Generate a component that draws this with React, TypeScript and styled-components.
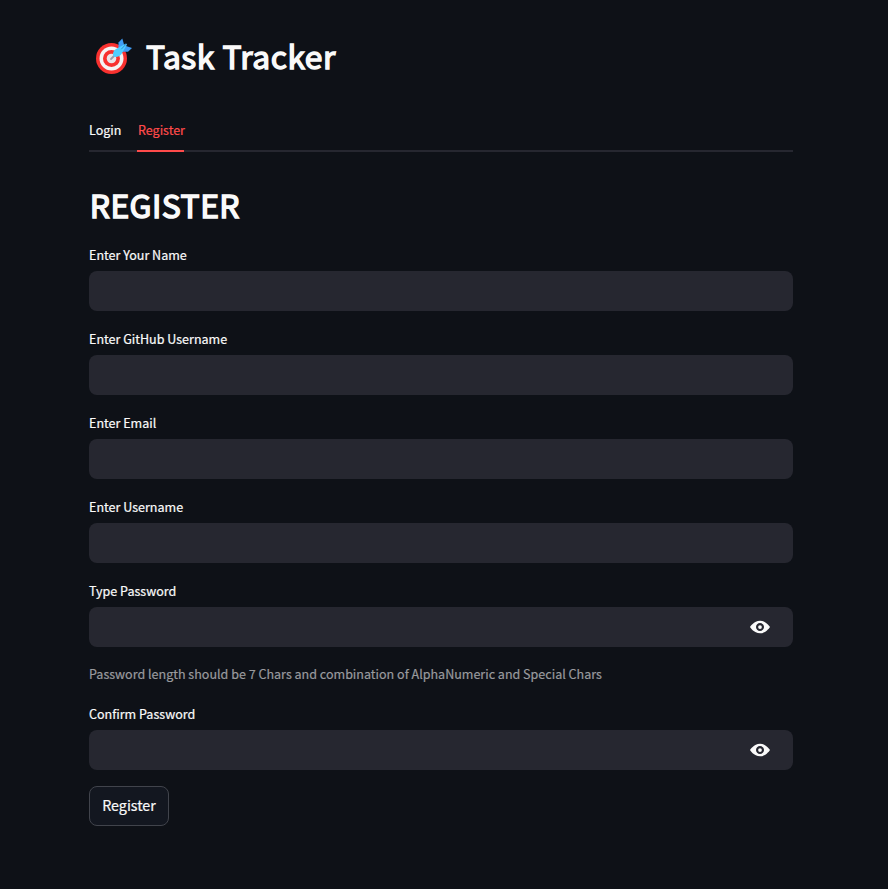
import React, { useState } from "react";
import styled, { createGlobalStyle } from "styled-components";

const GlobalStyle = createGlobalStyle`
  * { box-sizing: border-box; }
  body {
    margin: 0;
    background: #0e1117;
    color: #fafafa;
    font-family: "Noto Sans CJK SC", "Noto Sans", sans-serif;
    -webkit-text-stroke: 0.2px currentColor;
    overflow: hidden;
  }
`;

const Page = styled.main`
  width: 704px;
  min-height: 889px;
  margin-left: 89px;
  padding-top: 31px;
  display: flex;
  flex-direction: column;
`;

const Title = styled.h1`
  display: flex;
  align-items: center;
  gap: 14px;
  height: 48px;
  margin: 0;
  padding-left: 7px;
  font-size: 31.8px;
  line-height: 48px;
  font-weight: 400;
  letter-spacing: 0.5px;
  white-space: nowrap;
  -webkit-text-stroke: 1.4px currentColor;
`;

const TargetIcon = styled.svg`
  width: 36px;
  height: 36px;
  flex: none;
  margin-top: 2px;
`;

const TabList = styled.nav`
  display: flex;
  gap: 16px;
  height: 42px;
  margin-top: 31px;
  border-bottom: 2px solid #262730;
`;

const Tab = styled.button<{ $active?: boolean; $width: number }>`
  width: ${(p) => p.$width}px;
  height: 42px;
  padding: 0 0 1px ${(p) => (p.$active ? "1px" : "0")};
  border: 0;
  border-bottom: 2px solid ${(p) => (p.$active ? "#ff4b4b" : "transparent")};
  background: none;
  color: ${(p) => (p.$active ? "#ff4b4b" : "#fafafa")};
  font: 400 12.5px/24px "Noto Sans CJK SC", sans-serif;
  text-align: left;
  white-space: nowrap;
`;

const Heading = styled.h2`
  height: 48px;
  margin: 28px 0 15px;
  padding-left: 0.7px;
  font-size: 31.8px;
  line-height: 48px;
  font-weight: 400;
  letter-spacing: 0.5px;
  -webkit-text-stroke: 1.5px currentColor;
`;

const Form = styled.form`
  display: flex;
  flex-direction: column;
  align-items: stretch;
  gap: 16px;
`;

const Field = styled.label`
  display: flex;
  flex-direction: column;
  gap: 4px;
`;

const LabelText = styled.span`
  height: 24px;
  font-size: 12.54px;
  line-height: 24px;
`;

const InputBox = styled.div`
  display: flex;
  align-items: center;
  height: 40px;
  padding-right: 23px;
  border-radius: 8px;
  background: #262730;
`;

const Input = styled.input`
  flex: 1;
  min-width: 0;
  height: 40px;
  padding: 0 12px;
  border: 0;
  outline: 0;
  background: transparent;
  color: #fafafa;
  font: 400 14px "Noto Sans CJK SC", sans-serif;
`;

const RevealButton = styled.button`
  display: flex;
  padding: 0;
  border: 0;
  background: none;
  color: #fafafa;
`;

const Caption = styled.p`
  height: 23px;
  margin: 0;
  color: #999a9e;
  font-size: 12.54px;
  line-height: 21px;
  white-space: nowrap;
`;

const SubmitButton = styled.button`
  width: 80px;
  height: 40px;
  padding: 0 0 2px;
  border: 1px solid #41444c;
  border-radius: 8px;
  background: #131720;
  color: #fafafa;
  font: 400 14.3px/24px "Noto Sans CJK SC", sans-serif;
`;

function Target() {
  return (
    <TargetIcon viewBox="0 0 36 36" aria-hidden="true">
      <circle cx="15.5" cy="20.5" r="15.5" fill="#f8312f" />
      <circle cx="15.5" cy="20.5" r="12" fill="#f4f4f4" />
      <circle cx="15.5" cy="20.5" r="8.5" fill="#f8312f" />
      <circle cx="15.5" cy="20.5" r="4.8" fill="#e8e4e8" />
      <path d="M15 21 22 14" stroke="#9b9ba8" strokeWidth="1.8" strokeLinecap="round" />
      <path d="M22.5 12V4.5L26.3 0.4 28 6.5 26 12Z" fill="#3f9df5" />
      <path d="M24.5 13.8H32L36 10 30 8 25 10Z" fill="#3f9df5" />
      <path d="M17 17.5Q16.5 13 20 11L30 5.5 31 6.5 25.5 16Q23 19.5 18.5 19Z" fill="#50cfff" />
      <path d="M25.5 11 30 6.2" stroke="#2f86dd" strokeWidth="1" strokeLinecap="round" />
    </TargetIcon>
  );
}

function Eye() {
  return (
    <svg width="20" height="20" viewBox="0 0 8 8" fill="currentColor" aria-hidden="true">
      <path d="M4.03 1.5C1.5 1.5 0 4 0 4s1.5 2.5 4.03 2.5C6.5 6.5 8 4 8 4S6.5 1.5 4.03 1.5zM4 2.4c.88 0 1.6.72 1.6 1.6 0 .88-.72 1.6-1.6 1.6-.89 0-1.6-.72-1.6-1.6 0-.88.71-1.6 1.6-1.6zm0 .85a.75.75 0 1 0 0 1.5.75.75 0 0 0 0-1.5z" />
    </svg>
  );
}

function TextField({ label, type = "text" }: { label: string; type?: string }) {
  const [visible, setVisible] = useState(false);
  const secret = type === "password";
  return (
    <Field>
      <LabelText>{label}</LabelText>
      <InputBox>
        <Input type={secret && visible ? "text" : type} />
        {secret && (
          <RevealButton type="button" aria-label="Show password" onClick={() => setVisible(!visible)}>
            <Eye />
          </RevealButton>
        )}
      </InputBox>
    </Field>
  );
}

export default function App() {
  return (
    <>
      <GlobalStyle />
      <Page>
        <Title>
          <Target />
          Task Tracker
        </Title>
        <TabList>
          <Tab $width={32}>Login</Tab>
          <Tab $width={47} $active>Register</Tab>
        </TabList>
        <Heading>REGISTER</Heading>
        <Form onSubmit={(e) => e.preventDefault()}>
          <TextField label="Enter Your Name" />
          <TextField label="Enter GitHub Username" />
          <TextField label="Enter Email" />
          <TextField label="Enter Username" />
          <TextField label="Type Password" type="password" />
          <Caption>Password length should be 7 Chars and combination of AlphaNumeric and Special Chars</Caption>
          <TextField label="Confirm Password" type="password" />
          <SubmitButton type="submit">Register</SubmitButton>
        </Form>
      </Page>
    </>
  );
}
